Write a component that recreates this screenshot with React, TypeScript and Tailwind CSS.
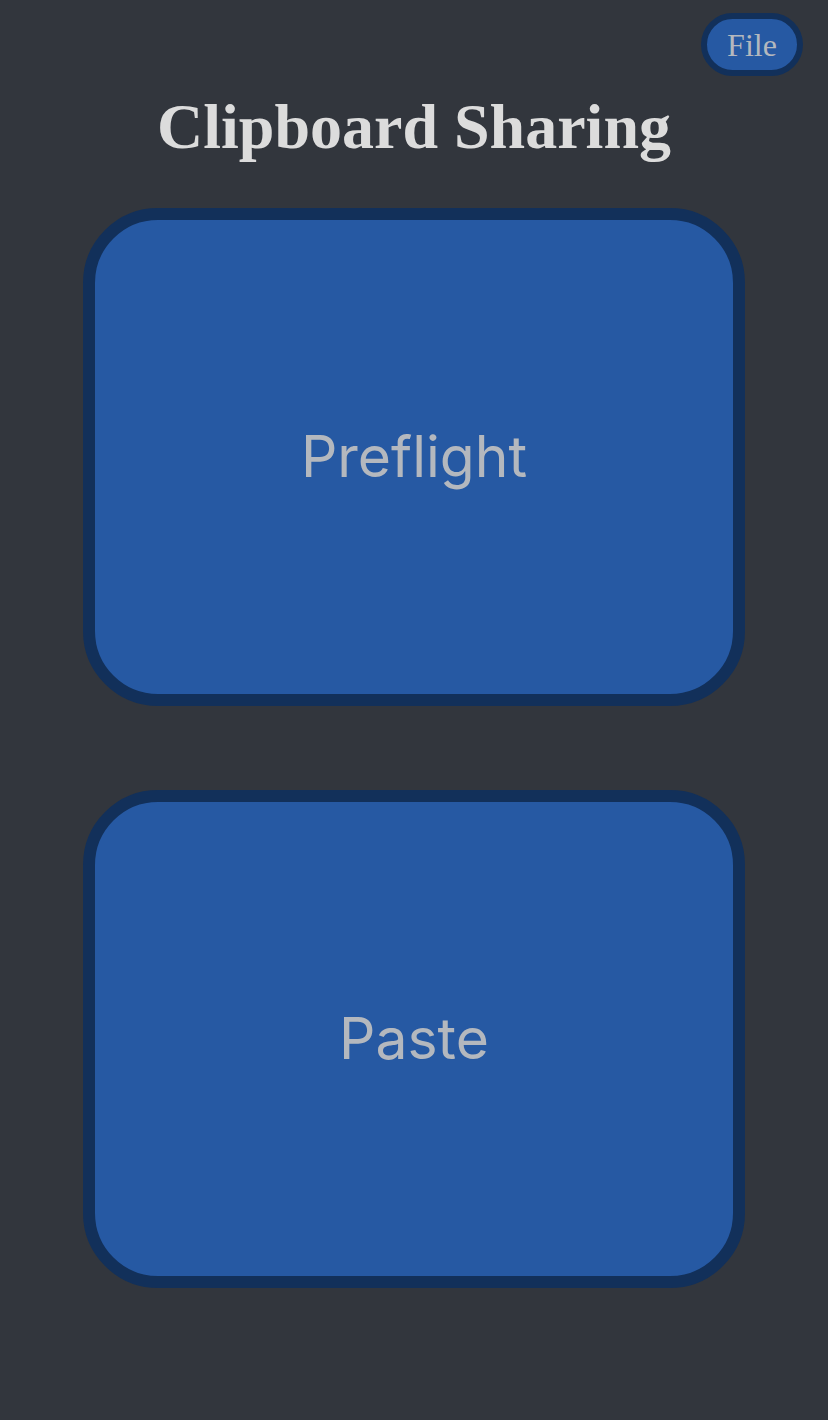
export default function App() {
  return (
    <div className="min-h-[1420px] bg-[#32363d] pt-[13px]">
      <div className="flex justify-end pr-[25px]">
        <button
          type="button"
          className="h-[63px] w-[102px] rounded-full border-[6px] border-[#12305a] bg-[#2659a3] text-[32px] leading-none text-[#b4b8be] [font-family:'Liberation_Serif',serif]"
        >
          File
        </button>
      </div>
      <h1 className="mt-[13px] text-center text-[64px] leading-[76px] font-bold text-[#dcdcdc] [font-family:'Liberation_Serif',serif]">
        Clipboard Sharing
      </h1>
      <div className="mt-[43px] flex flex-col items-center gap-[84px]">
        {["Preflight", "Paste"].map((label) => (
          <button
            key={label}
            type="button"
            className="flex h-[498px] w-[662px] items-center justify-center rounded-[75px] border-[12px] border-[#12305a] bg-[#2659a3] text-[57px] text-[#b4b8be] [font-family:Inter,sans-serif]"
          >
            {label}
          </button>
        ))}
      </div>
    </div>
  );
}
